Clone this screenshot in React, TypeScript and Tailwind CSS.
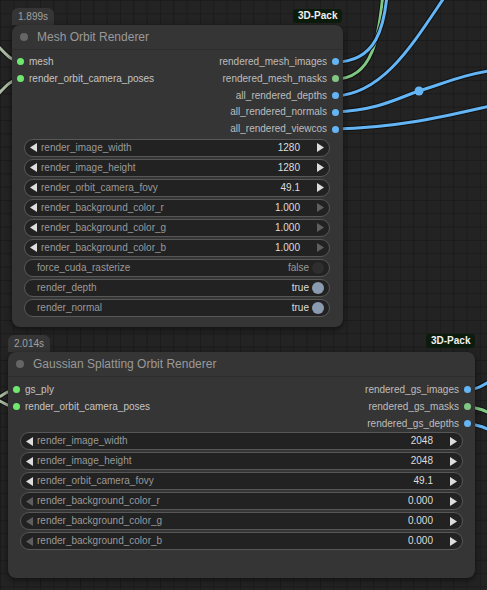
import React from 'react';

type Slot = { name: string; color: string };
type Widget =
  | { kind: 'num'; label: string; value: string; dimLeft?: boolean; dimRight?: boolean }
  | { kind: 'bool'; label: string; on: boolean };

const BLUE = '#64b5f6';
const GREEN = '#81c784';
const LIME = '#70e870';

function Arrow({ dir, dim }: { dir: 'l' | 'r'; dim?: boolean }) {
  return (
    <svg width="7" height="9" viewBox="0 0 7 9" className="shrink-0">
      <polygon points={dir === 'l' ? '7,0 7,9 0,4.5' : '0,0 0,9 7,4.5'} fill={dim ? '#5e5e5e' : '#dddddd'} />
    </svg>
  );
}

function WidgetRow({ w }: { w: Widget }) {
  if (w.kind === 'bool') {
    return (
      <div className="flex h-[18px] items-center rounded-full border border-[#575757] bg-[#222222] pl-[12px] pr-[5px]">
        <span className="text-[#999999]">{w.label}</span>
        <span className={`ml-auto ${w.on ? 'text-[#dddddd]' : 'text-[#999999]'}`}>{w.on ? 'true' : 'false'}</span>
        <span
          className={`ml-[3px] h-[12px] w-[12px] rounded-full ${w.on ? 'bg-[#8a9bb0]' : 'bg-[#2e2e2e]'}`}
        />
      </div>
    );
  }
  return (
    <div className="flex h-[18px] items-center rounded-full border border-[#575757] bg-[#222222] pl-[5px] pr-[5px]">
      <Arrow dir="l" dim={w.dimLeft} />
      <span className="ml-[4px] text-[#999999]">{w.label}</span>
      <span className="ml-auto text-[#dddddd]">{w.value}</span>
      <span className="ml-[17px]">
        <Arrow dir="r" dim={w.dimRight} />
      </span>
    </div>
  );
}

function Node({
  className,
  title,
  time,
  timeClass,
  packClass,
  inputs,
  outputs,
  widgets,
  slotsClass,
  widgetsClass,
}: {
  className: string;
  title: string;
  time: string;
  timeClass: string;
  packClass: string;
  inputs: Slot[];
  outputs: Slot[];
  widgets: Widget[];
  slotsClass: string;
  widgetsClass: string;
}) {
  const rows = Math.max(inputs.length, outputs.length);
  return (
    <>
      <div className={`absolute flex h-[17px] items-center rounded-t-md bg-[#353535] px-[6px] text-[10px] text-[#a0a0a0] ${timeClass}`}>
        {time}
      </div>
      <div className={`absolute flex h-[14px] items-center rounded-[4px] bg-[#0c1c0c] px-[5px] text-[10px] font-bold text-[#f0f0f0] ${packClass}`}>
        3D-Pack
      </div>
      <div className={`absolute rounded-lg bg-[#353535] shadow-[0_2px_6px_rgba(0,0,0,0.55)] ${className}`}>
        <div className="flex h-[25px] items-center border-b border-[#2d2d2d] pl-[8px]">
          <span className="h-[8px] w-[8px] rounded-full bg-[#666666]" />
          <span className="ml-[9px] text-[12px] text-[#999999]">{title}</span>
        </div>
        <div className={slotsClass}>
          {Array.from({ length: rows }).map((_, i) => (
            <div key={i} className="flex h-[16.8px] items-center justify-between">
              {inputs[i] ? (
                <div className="flex items-center pl-[4.5px]">
                  <span className="h-[7px] w-[7px] rounded-full" style={{ backgroundColor: inputs[i].color }} />
                  <span className="ml-[5.5px] text-[#c4c4c4]">{inputs[i].name}</span>
                </div>
              ) : (
                <div />
              )}
              {outputs[i] ? (
                <div className="flex items-center pr-[4.5px]">
                  <span className="mr-[4.5px] text-[#bdbdbd]">{outputs[i].name}</span>
                  <span className="h-[7px] w-[7px] rounded-full" style={{ backgroundColor: outputs[i].color }} />
                </div>
              ) : (
                <div />
              )}
            </div>
          ))}
        </div>
        <div className={`flex flex-col gap-[2px] ${widgetsClass}`}>
          {widgets.map((w) => (
            <WidgetRow key={w.label} w={w} />
          ))}
        </div>
      </div>
    </>
  );
}

function Wire({ d, color }: { d: string; color: string }) {
  return (
    <g fill="none" strokeLinecap="round">
      <path d={d} stroke="#111111" strokeWidth="5" />
      <path d={d} stroke={color} strokeWidth="3" />
    </g>
  );
}

export default function App() {
  const pale = '#a9b8a1';
  return (
    <div className="relative h-[590px] w-[487px] overflow-hidden bg-[#232323] bg-[linear-gradient(to_right,#1b1b1b_1px,transparent_1px),linear-gradient(to_bottom,#1b1b1b_1px,transparent_1px)] bg-[size:13.33px_13.33px] font-['Liberation_Sans',Arial,sans-serif] text-[10px] leading-none">
      <svg className="absolute inset-0" width="487" height="590" viewBox="0 0 487 590">
        <Wire d="M-20,30 C0,44 6,60 20,62" color={pale} />
        <Wire d="M-20,112 C0,96 6,80 20,79" color={pale} />
        <Wire d="M335,79 C372,79 380,40 384,-20" color={GREEN} />
        <Wire d="M335,62 C375,62 386,30 388,-20" color={BLUE} />
        <Wire d="M335,96 C385,94 415,40 448,-8" color={BLUE} />
        <Wire d="M335,112 C380,110 400,97 419,91 C445,83 465,74 495,70" color={BLUE} />
        <Wire d="M335,129 C400,128 450,115 495,105" color={BLUE} />
        <circle cx="419" cy="91" r="4.5" fill={BLUE} />
        <Wire d="M16,390 C6,390 4,396 -6,399" color={pale} />
        <Wire d="M16,407 C6,407 4,401 -6,399" color={pale} />
        <Wire d="M467,390 C480,389 486,383 497,377" color={BLUE} />
        <Wire d="M467,407 C478,407 486,411 497,417" color={GREEN} />
        <Wire d="M467,424 C478,424 486,428 497,434" color={BLUE} />
      </svg>

      <Node
        className="left-[12px] top-[25px] w-[331px] pb-[10px]"
        timeClass="left-[12px] top-[8px]"
        packClass="left-[293px] top-[9px]"
        title="Mesh Orbit Renderer"
        time="1.899s"
        slotsClass="pt-[3.6px] pb-[1px]"
        widgetsClass="pl-[12px] pr-[13px]"
        inputs={[
          { name: 'mesh', color: LIME },
          { name: 'render_orbit_camera_poses', color: LIME },
        ]}
        outputs={[
          { name: 'rendered_mesh_images', color: BLUE },
          { name: 'rendered_mesh_masks', color: GREEN },
          { name: 'all_rendered_depths', color: BLUE },
          { name: 'all_rendered_normals', color: BLUE },
          { name: 'all_rendered_viewcos', color: BLUE },
        ]}
        widgets={[
          { kind: 'num', label: 'render_image_width', value: '1280' },
          { kind: 'num', label: 'render_image_height', value: '1280' },
          { kind: 'num', label: 'render_orbit_camera_fovy', value: '49.1' },
          { kind: 'num', label: 'render_background_color_r', value: '1.000', dimRight: true },
          { kind: 'num', label: 'render_background_color_g', value: '1.000', dimRight: true },
          { kind: 'num', label: 'render_background_color_b', value: '1.000', dimRight: true },
          { kind: 'bool', label: 'force_cuda_rasterize', on: false },
          { kind: 'bool', label: 'render_depth', on: true },
          { kind: 'bool', label: 'render_normal', on: true },
        ]}
      />

      <Node
        className="left-[8px] top-[352px] w-[467px] pb-[28px]"
        timeClass="left-[8px] top-[335px]"
        packClass="left-[426px] top-[334px]"
        title="Gaussian Splatting Orbit Renderer"
        time="2.014s"
        slotsClass="pt-[4.6px] pb-[0.5px]"
        widgetsClass="pl-[12px] pr-[12px]"
        inputs={[
          { name: 'gs_ply', color: LIME },
          { name: 'render_orbit_camera_poses', color: LIME },
        ]}
        outputs={[
          { name: 'rendered_gs_images', color: BLUE },
          { name: 'rendered_gs_masks', color: GREEN },
          { name: 'rendered_gs_depths', color: BLUE },
        ]}
        widgets={[
          { kind: 'num', label: 'render_image_width', value: '2048' },
          { kind: 'num', label: 'render_image_height', value: '2048' },
          { kind: 'num', label: 'render_orbit_camera_fovy', value: '49.1' },
          { kind: 'num', label: 'render_background_color_r', value: '0.000', dimLeft: true },
          { kind: 'num', label: 'render_background_color_g', value: '0.000', dimLeft: true },
          { kind: 'num', label: 'render_background_color_b', value: '0.000', dimLeft: true },
        ]}
      />
    </div>
  );
}
